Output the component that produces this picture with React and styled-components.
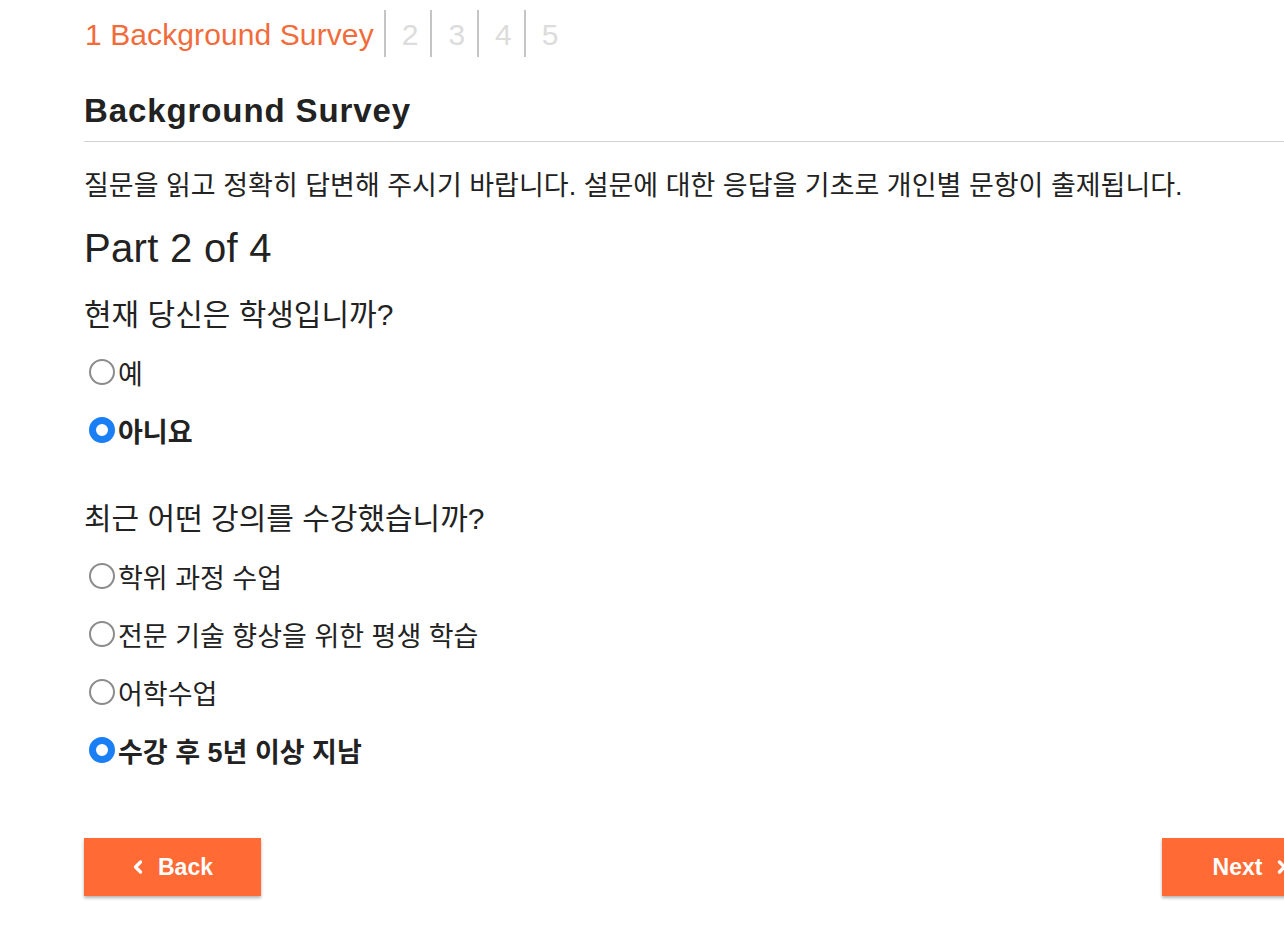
import React, { useState } from "react";
import styled, { createGlobalStyle } from "styled-components";
import { ChevronLeft, ChevronRight } from "lucide-react";

const GlobalStyle = createGlobalStyle`
    html, body {
        margin: 0;
        padding: 0;
        background: #ffffff;
        overflow-x: hidden;
    }
    body {
        font-family: "Liberation Sans", Arial, "Noto Sans CJK KR", sans-serif;
        color: #222222;
    }
`;

const Page = styled.main`
    width: 1255px;
    margin-left: 84px;
    padding-top: 10px;
`;

const Stepper = styled.nav`
    display: flex;
    height: 47px;
`;

const Step = styled.div`
    box-sizing: border-box;
    height: 47px;
    padding: ${(p) => (p.$first ? "3px 10px 0 1px" : "3px 12px 0 16px")};
    font-size: 30px;
    line-height: 44px;
    letter-spacing: ${(p) => (p.$first ? "0.1px" : "0")};
    color: ${(p) => (p.$active ? "#f26b3a" : "#dcdcdc")};
    border-left: ${(p) => (p.$first ? "none" : "2px solid #c4c4c4")};
`;

const Title = styled.h1`
    margin: 36px 0 0;
    padding-bottom: 12px;
    font-size: 33px;
    line-height: 36px;
    letter-spacing: 0.9px;
    font-weight: bold;
    color: #222222;
    border-bottom: 1px solid #d2d2d2;
`;

const Intro = styled.p`
    margin: 29px 0 0;
    font-size: 27px;
    line-height: 30px;
    color: #222222;
`;

const Part = styled.h2`
    margin: 25px 0 0;
    font-size: 40px;
    line-height: 44px;
    letter-spacing: 0.3px;
    font-weight: normal;
    color: #222222;
`;

const Question = styled.h3`
    margin: ${(p) => (p.$spaced ? "44px" : "29px")} 0 0;
    font-size: 30px;
    line-height: 32px;
    font-weight: normal;
    color: #222222;
`;

const Options = styled.div`
    display: flex;
    flex-direction: column;
    margin-top: 12px;
`;

const Option = styled.label`
    display: flex;
    align-items: center;
    height: 58px;
    font-size: 27px;
    font-weight: ${(p) => (p.$checked ? "bold" : "normal")};
    color: #222222;
    cursor: pointer;
`;

const Dot = styled.span`
    box-sizing: border-box;
    width: 26px;
    height: 26px;
    margin: 0 3px 0 5px;
    border-radius: 50%;
    border: ${(p) => (p.$checked ? "7px solid #1a7ef5" : "2px solid #8c8c8c")};
    background: #ffffff;
`;

const Actions = styled.div`
    display: flex;
    justify-content: space-between;
    margin-top: 59px;
    padding-bottom: 40px;
`;

const NavButton = styled.button`
    display: flex;
    align-items: center;
    justify-content: center;
    gap: 10px;
    width: 177px;
    height: 58px;
    padding: 0 ${(p) => (p.$back ? "4px 0 0" : "0 0 4px")};
    border: none;
    background: #ff6a35;
    color: #ffffff;
    font-family: inherit;
    font-size: 23px;
    font-weight: bold;
    box-shadow: 0 2px 3px rgba(0, 0, 0, 0.3);
    cursor: pointer;
`;

const questions = [
    {
        text: "현재 당신은 학생입니까?",
        options: ["예", "아니요"],
        picked: 1,
    },
    {
        text: "최근 어떤 강의를 수강했습니까?",
        options: ["학위 과정 수업", "전문 기술 향상을 위한 평생 학습", "어학수업", "수강 후 5년 이상 지남"],
        picked: 3,
    },
];

export default function App() {
    const [answers, setAnswers] = useState(questions.map((q) => q.picked));

    return (
        <>
            <GlobalStyle />
            <Page>
                <Stepper>
                    <Step $first $active>1 Background Survey</Step>
                    {[2, 3, 4, 5].map((n) => (
                        <Step key={n}>{n}</Step>
                    ))}
                </Stepper>
                <Title>Background Survey</Title>
                <Intro>질문을 읽고 정확히 답변해 주시기 바랍니다. 설문에 대한 응답을 기초로 개인별 문항이 출제됩니다.</Intro>
                <Part>Part 2 of 4</Part>
                {questions.map((q, qi) => (
                    <section key={q.text}>
                        <Question $spaced={qi > 0}>{q.text}</Question>
                        <Options>
                            {q.options.map((label, oi) => {
                                const checked = answers[qi] === oi;
                                return (
                                    <Option
                                        key={label}
                                        $checked={checked}
                                        onClick={() => setAnswers(answers.map((a, i) => (i === qi ? oi : a)))}
                                    >
                                        <Dot $checked={checked} />
                                        {label}
                                    </Option>
                                );
                            })}
                        </Options>
                    </section>
                ))}
                <Actions>
                    <NavButton $back>
                        <ChevronLeft size={20} strokeWidth={4} />
                        Back
                    </NavButton>
                    <NavButton>
                        Next
                        <ChevronRight size={20} strokeWidth={4} />
                    </NavButton>
                </Actions>
            </Page>
        </>
    );
}
